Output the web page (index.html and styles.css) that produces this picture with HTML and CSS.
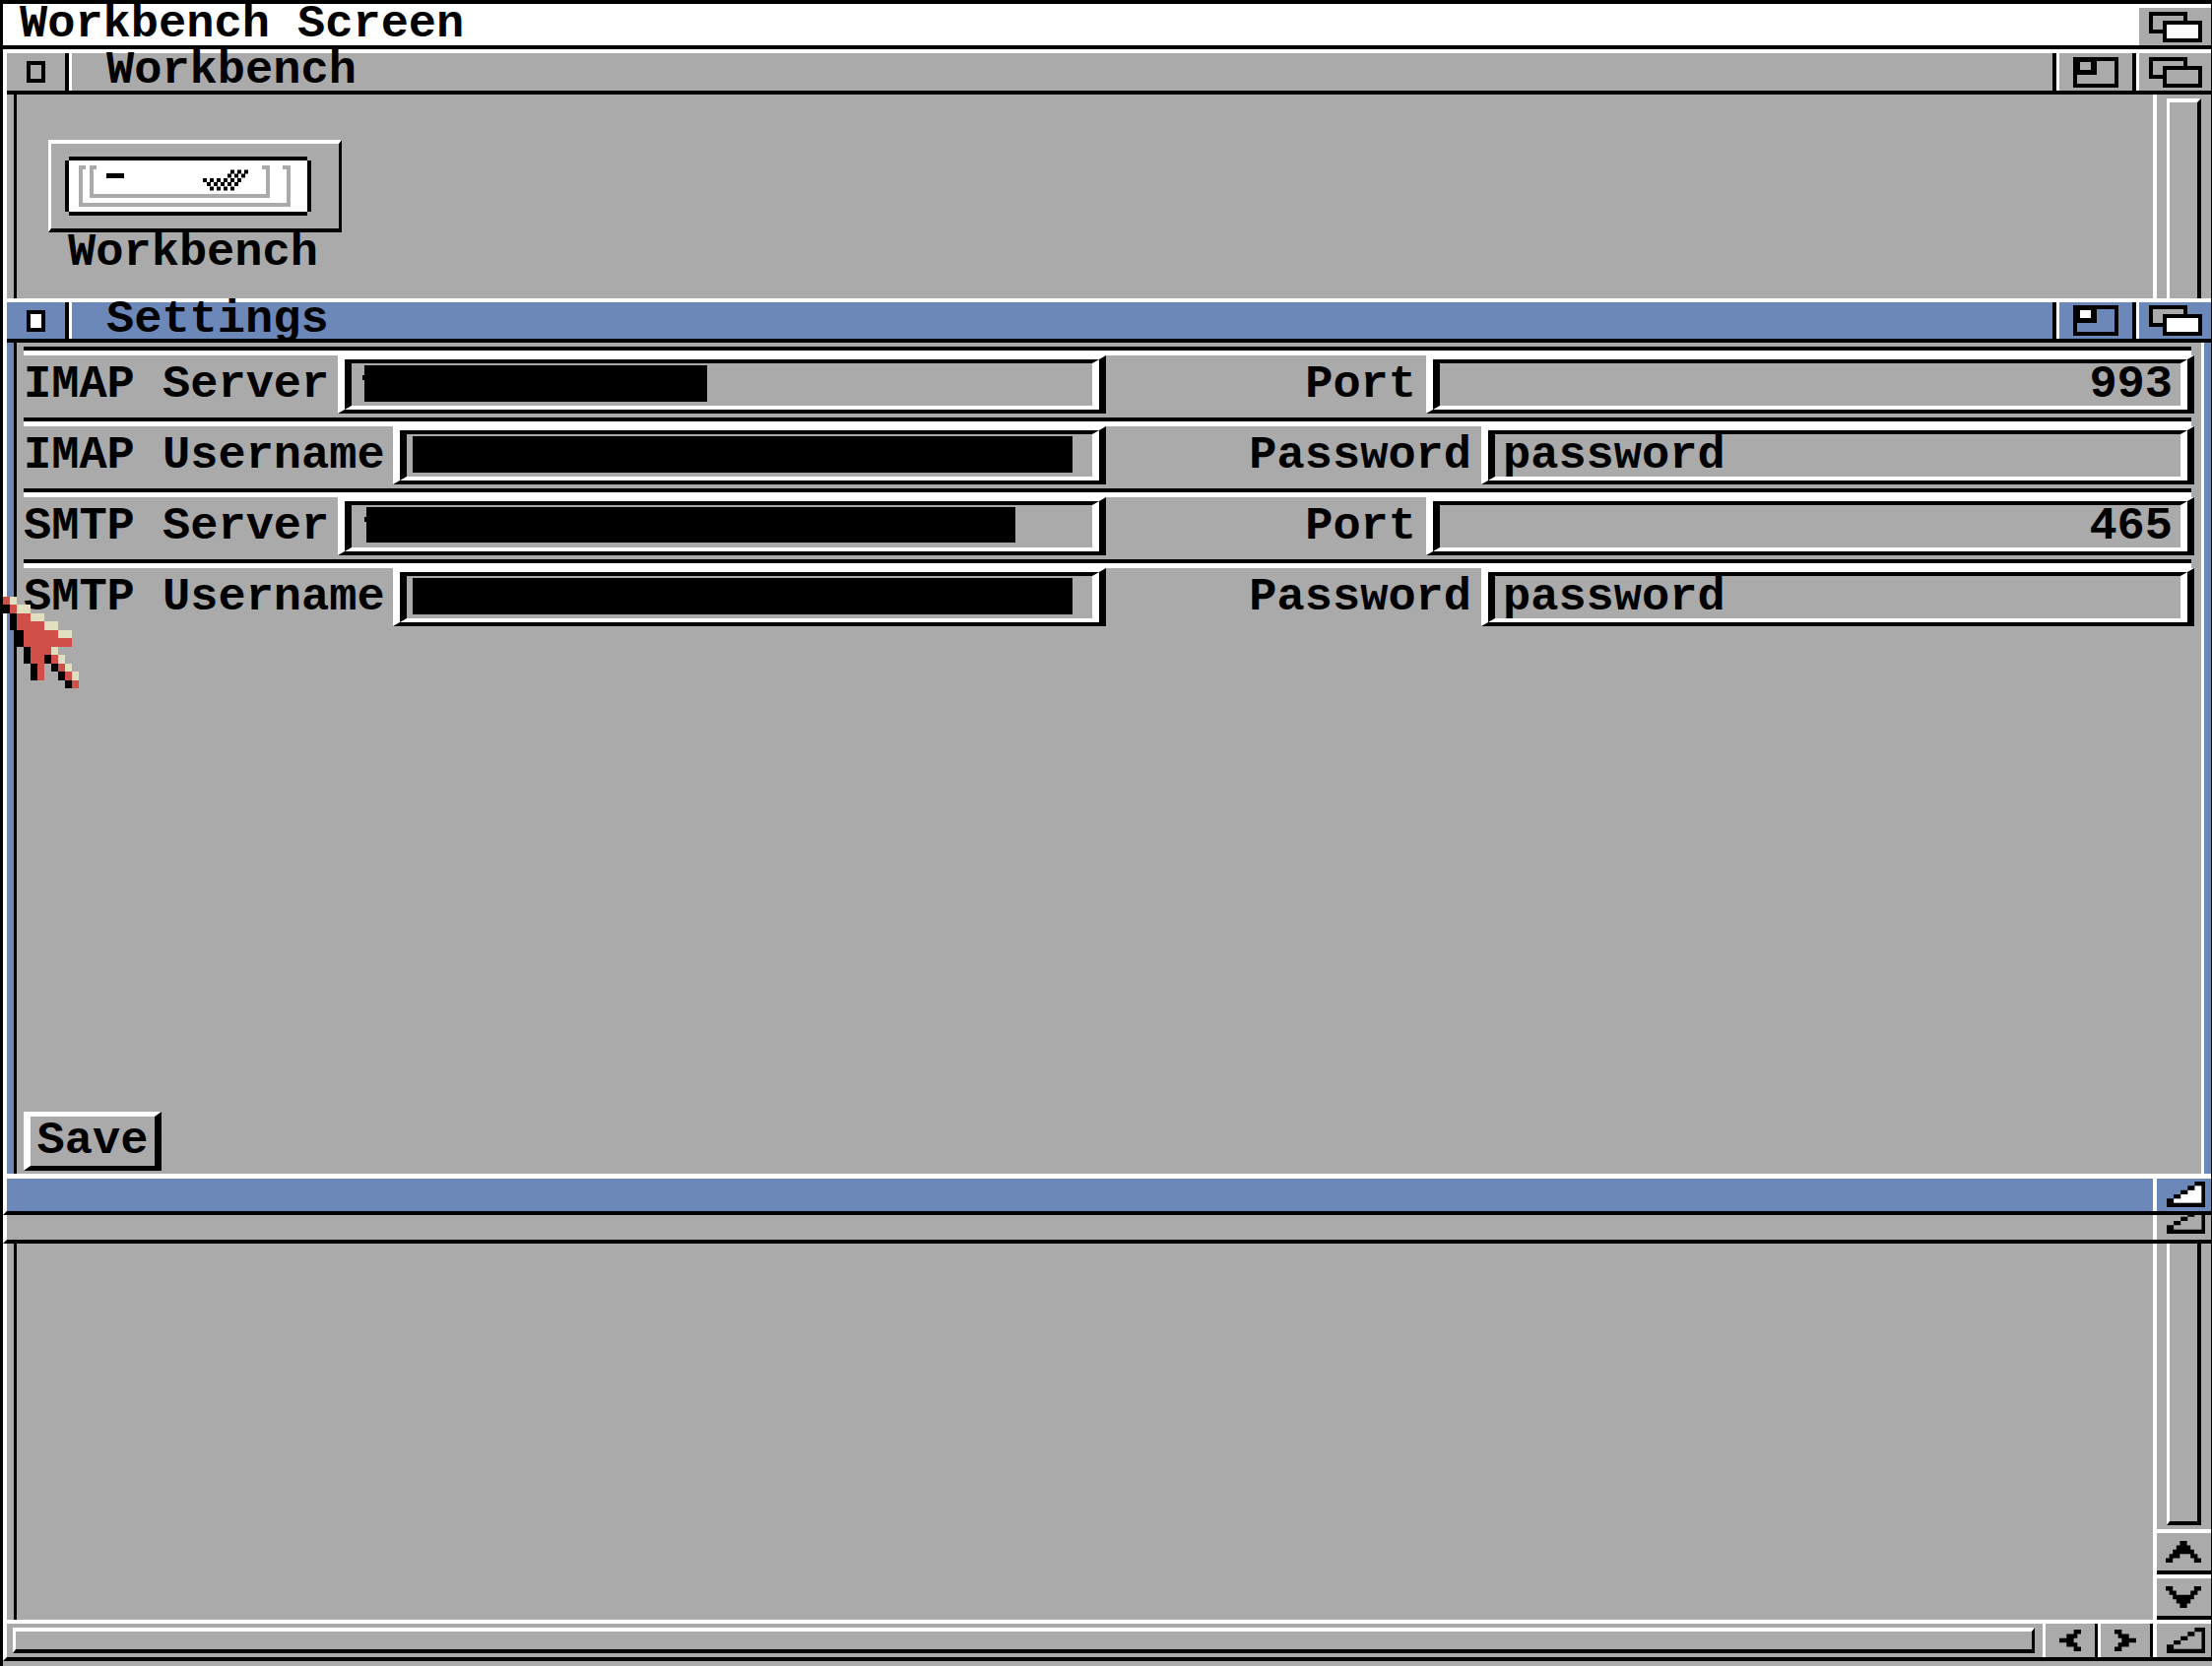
FILE: index.html
```html
<!DOCTYPE html>
<html lang="en">
<head>
<meta charset="utf-8">
<title>Workbench Screen</title>
<link rel="stylesheet" href="styles.css">
</head>
<body>
<svg class="defs" aria-hidden="true">
  <symbol id="zoom" viewBox="0 0 46 31">
    <path fill="#000" d="M0 0h46v31H0z"/>
    <path class="face" d="M24 4h18v23H4V18h20z"/>
    <path class="chip" d="M7 5h11v8H7z"/>
  </symbol>
  <symbol id="depth" viewBox="0 0 54 31">
    <path fill="#000" d="M0 0h39v22H0z"/>
    <path fill="#aaa" d="M4 4h31v14H4z"/>
    <path fill="#000" d="M14 9h40v22H14z"/>
    <path class="chip" d="M18 13h32v14H18z"/>
  </symbol>
  <symbol id="size" viewBox="0 0 11 6" preserveAspectRatio="none">
    <path class="chip" d="M8 1h2v4H2V4h2V3h2V2h2z"/>
    <path fill="#000" d="M8 0h3v6H0V4h2V3h2V2h2V1h2zM8 1v1H6v1H4v1H2v1h8V1z"/>
  </symbol>
</svg>

<div class="screen">
  <header class="menubar">
    <h1 class="menubar-title">Workbench Screen</h1>
    <button class="depth-gadget front" aria-label="Cycle screens"><svg class="depth-icon"><use href="#depth"/></svg></button>
  </header>

  <section class="window workbench">
    <div class="titlebar">
      <button class="close-gadget" aria-label="Close"><span class="close-icon"></span></button>
      <h2 class="title">Workbench</h2>
      <button class="zoom-gadget" aria-label="Zoom"><svg class="zoom-icon"><use href="#zoom"/></svg></button>
      <button class="depth-gadget" aria-label="Depth"><svg class="depth-icon"><use href="#depth"/></svg></button>
    </div>
    <div class="workbench-body">
      <main class="drawer">
        <figure class="disk">
          <div class="disk-frame">
            <svg class="disk-art" viewBox="0 0 250 60" aria-hidden="true">
              <path fill="#000" d="M4 0h242v4h4v52h-4v4H4v-4H0V4h4z"/>
              <path fill="#fff" d="M4 4h242v52H4z"/>
              <path fill="none" stroke="#aaa" stroke-width="4" d="M21 11h-5v38h211V11h-6M32 11h-5v29h179V11h-6"/>
              <path fill="#000" d="M42 17h18v5H42z"/>
              <path fill="none" stroke="#000" stroke-width="4" stroke-dasharray="4 3" d="M168 15.500h18M165 19.500h18M140 24h39M144 28h32M147 32.500h25"/>
            </svg>
          </div>
          <figcaption class="disk-name">Workbench</figcaption>
        </figure>
      </main>
      <div class="vscroll">
        <div class="vtrack"><div class="vknob"></div></div>
        <button class="arrow-v" aria-label="Scroll up"><svg class="glyph-v" viewBox="0 0 10 5" preserveAspectRatio="none"><path d="M4 0h2v1h1v1h1v1h1v1h1v1H8V4H7V3H6H4v1H3H3v0H2v1H0V4h1V3h1V2h1V1h1z"/></svg></button>
        <button class="arrow-v" aria-label="Scroll down"><svg class="glyph-v" viewBox="0 0 10 5" preserveAspectRatio="none"><path d="M4 5h2V4h1V3h1V2h1V1h1V0H8v1H7v1H3V1H2V0H0v1h1v1h1v1h1v1h1z"/></svg></button>
      </div>
    </div>
    <div class="hscroll">
      <div class="hknob"></div>
      <button class="arrow-h" aria-label="Scroll left"><svg class="glyph-h" viewBox="0 0 6 5" preserveAspectRatio="none"><path d="M4 0h2v1H5v1H4v1h1v1h1v1H4V4H2V3H0V2h2V1h2z"/></svg></button>
      <button class="arrow-h" aria-label="Scroll right"><svg class="glyph-h" viewBox="0 0 6 5" preserveAspectRatio="none"><path d="M2 0H0v1h1v1h1v1H1v1H0v1h2V4h2V3h2V2H4V1H2z"/></svg></button>
      <button class="size-gadget" aria-label="Resize"><svg class="size-icon"><use href="#size"/></svg></button>
    </div>
  </section>

  <section class="window overlay behind">
    <div class="bottombar"><button class="size-gadget" aria-label="Resize"><svg class="size-icon"><use href="#size"/></svg></button></div>
  </section>

  <section class="window overlay settings front">
    <div class="titlebar">
      <button class="close-gadget" aria-label="Close"><span class="close-icon"></span></button>
      <h2 class="title">Settings</h2>
      <button class="zoom-gadget" aria-label="Zoom"><svg class="zoom-icon"><use href="#zoom"/></svg></button>
      <button class="depth-gadget" aria-label="Depth"><svg class="depth-icon"><use href="#depth"/></svg></button>
    </div>
    <form class="form">
      <div class="row">
        <div class="pair"><label class="label" for="imap-server">IMAP Server</label><div class="field"><input class="input" id="imap-server" type="text"><span class="mask mask-imap-server"></span></div></div>
        <div class="pair"><label class="label right" for="imap-port">Port</label><div class="field"><input class="input number" id="imap-port" type="text" value="993"></div></div>
      </div>
      <div class="row wide">
        <div class="pair"><label class="label" for="imap-user">IMAP Username</label><div class="field"><input class="input" id="imap-user" type="text"><span class="mask mask-user"></span></div></div>
        <div class="pair"><label class="label right" for="imap-pass">Password</label><div class="field"><input class="input" id="imap-pass" type="text" value="password"></div></div>
      </div>
      <div class="row">
        <div class="pair"><label class="label" for="smtp-server">SMTP Server</label><div class="field"><input class="input" id="smtp-server" type="text"><span class="mask mask-smtp-server"></span></div></div>
        <div class="pair"><label class="label right" for="smtp-port">Port</label><div class="field"><input class="input number" id="smtp-port" type="text" value="465"></div></div>
      </div>
      <div class="row wide">
        <div class="pair"><label class="label" for="smtp-user">SMTP Username</label><div class="field"><input class="input" id="smtp-user" type="text"><span class="mask mask-user"></span></div></div>
        <div class="pair"><label class="label right" for="smtp-pass">Password</label><div class="field"><input class="input" id="smtp-pass" type="text" value="password"></div></div>
      </div>
      <button class="save" type="button">Save</button>
    </form>
    <div class="bottombar"><button class="size-gadget" aria-label="Resize"><svg class="size-icon"><use href="#size"/></svg></button></div>
  </section>

  <svg class="pointer" viewBox="0 0 11 11" preserveAspectRatio="none" shape-rendering="crispEdges" aria-hidden="true">
    <path fill="#000" d="M0 1h1v1H0zM1 2h1v2H1zM2 4h1v2H2zM3 6h1v2H3zM4 8h1v2H4zM6 7h1v1H6zM7 8h1v1H7zM8 9h1v1H8zM9 10h1v1H9z"/>
    <path fill="#d04f48" d="M0 0h1v1H0zM1 1h1v1H1zM2 2h2v1H2zM2 3h4v1H2zM3 4h5v1H3zM3 5h7v1H3zM4 6h3v1H4zM4 7h2v1H4zM7 7h1v1H7zM5 8h1v2H5zM8 8h1v1H8zM9 9h1v1H9zM10 10h1v1h-1z"/>
    <path fill="#e0e0c0" d="M1 0h1v1H1zM2 1h2v1H2zM4 2h2v1H4zM6 3h2v1H6zM8 4h2v1H8zM7 6h1v1H7zM8 7h1v1H8zM9 8h1v1H9zM10 9h1v1h-1z"/>
  </svg>
</div>
</body>
</html>
```
FILE: styles.css
```css
* { box-sizing: border-box; }

:root {
  --grey: #aaa;
  --blue: #6c88b8;
  --black: #000;
  --white: #fff;
}

body {
  margin: 0;
  background: var(--black);
  color: var(--black);
  font: bold 47px/36px "Liberation Mono", "Courier New", monospace;
}

h1, h2, figure { margin: 0; font: inherit; }

button, input {
  margin: 0;
  padding: 0;
  border: 0;
  border-radius: 0;
  background: none;
  color: inherit;
  font: inherit;
  outline: 0;
}

svg { display: block; }
.defs { position: absolute; width: 0; height: 0; }

.screen {
  position: relative;
  display: flex;
  flex-direction: column;
  min-height: 100vh;
  padding: 4px 1px 5px 3px;
  background: linear-gradient(var(--grey), var(--grey)) content-box, linear-gradient(var(--grey), var(--grey)) 3px 100% / 100% 5px no-repeat, var(--black);
}

/* Screen bar */
.menubar {
  display: flex;
  height: 46px;
  background: var(--white);
  border-bottom: 4px solid var(--black);
}
.menubar-title { flex: 1; padding-left: 17px; line-height: 42px; }
.menubar .depth-gadget { margin-top: 4px; border-left: 0; width: 73px; padding: 0 0 0 10px; background: var(--grey); }

/* Windows */
.window {
  --face: var(--grey);
  --chip: var(--grey);
  display: flex;
  flex-direction: column;
  border-left: 4px solid var(--white);
  border-bottom: 4px solid var(--black);
  background: var(--face);
}
.front { --chip: var(--white); }
.window.front { --face: var(--blue); }
.chip { fill: var(--chip, #fff); }
.face { fill: var(--face); }

.workbench { flex: 1; }
.overlay { position: absolute; left: 3px; right: 1px; top: 303px; }
.settings { height: 55vh; }
.behind { height: calc(55vh + 29px); justify-content: flex-end; }

.titlebar {
  display: flex;
  height: 46px;
  border-top: 4px solid var(--white);
  border-bottom: 4px solid var(--black);
}
.settings .titlebar { height: 45px; }
.close-gadget { width: 63px; padding-left: 20px; border-right: 4px solid var(--black); }
.close-icon { display: block; width: 19px; height: 22px; border: 4px solid var(--black); background: var(--chip); }
.title { flex: 1; padding-left: 35px; border-left: 3px solid var(--white); border-right: 4px solid var(--black); }
.zoom-gadget { width: 81px; padding-left: 14px; border-left: 3px solid var(--white); border-right: 4px solid var(--black); }
.depth-gadget { width: 76px; padding-left: 10px; border-left: 3px solid var(--white); }
.zoom-icon { width: 46px; height: 31px; }
.depth-icon { width: 54px; height: 31px; }

.size-gadget { width: 59px; padding-left: 10px; border-left: 4px solid var(--white); }
.size-icon { width: 39px; height: 26px; }

.bottombar { display: flex; justify-content: flex-end; height: 38px; flex: none; }
.settings .bottombar { border-top: 5px solid var(--white); }

/* Workbench contents */
.workbench-body {
  display: flex;
  flex: 1;
  margin-left: 7px;
}
.drawer { flex: 1; padding: 46px 32px; border-left: 3px solid var(--black); }
.disk { width: 298px; }
.disk-frame {
  height: 94px;
  padding: 13px 14px;
  border: solid;
  border-width: 4px 3px;
  border-color: var(--white) var(--black) var(--black) var(--white);
}
.disk-art { width: 250px; height: 60px; }
.disk-name { padding: 3px 4px 0 0; text-align: center; }

.vscroll { display: flex; flex-direction: column; width: 59px; border-left: 4px solid var(--white); }
.vtrack { display: flex; flex: 1; padding: 4px 10px; }
.vknob {
  flex: 1;
  border: solid;
  border-width: 4px 4px 4px 3px;
  border-color: var(--white) var(--black) var(--black) var(--white);
}
.arrow-v {
  height: 46px;
  padding-left: 9px;
  border: solid;
  border-width: 4px 0;
  border-color: var(--white) transparent var(--black);
}
.glyph-v { width: 36px; height: 22px; }

.hscroll { display: flex; height: 38px; border-top: 4px solid var(--white); }
.hknob {
  flex: 1;
  margin: 4px 8px 4px 6px;
  border: solid;
  border-width: 4px 3px;
  border-color: var(--white) var(--black) var(--black) var(--white);
}
.arrow-h { width: 56px; padding-left: 14px; border: solid; border-width: 0 3px; border-color: transparent var(--black) transparent var(--white); }
.glyph-h { width: 22px; height: 22px; }

/* Settings form */
.form {
  display: flex;
  flex-direction: column;
  flex: 1;
  margin: 0 7px;
  padding: 4px 7px 3px;
  border-left: 3px solid var(--black);
  border-right: 3px solid var(--white);
  background: var(--grey);
}
.row {
  --label: 319px;
  display: grid;
  grid-template-columns: 1fr 1fr;
  grid-template-rows: 9px 59px;
  column-gap: 6px;
  height: 72px;
}
.row.wide { --label: 375px; }
.row::before {
  content: "";
  grid-column: 1 / -1;
  margin-right: 3px;
  border-top: 4px solid var(--black);
  border-bottom: 5px solid var(--white);
}
.pair { display: grid; grid-template: 59px / var(--label) 1fr; }
.label { line-height: 59px; white-space: nowrap; }
.label.right { padding-right: 10px; text-align: right; }
.field {
  position: relative;
  display: flex;
  border: solid;
  border-width: 4px 7px;
  border-color: var(--white) var(--black) var(--black) var(--white);
}
.input {
  flex: 1;
  min-width: 0;
  height: 51px;
  padding: 0 8px;
  border: solid;
  border-width: 4px 7px;
  border-color: var(--black) var(--white) var(--white) var(--black);
}
.number { text-align: right; }

/* Blacked-out values, with the edge of the first letter showing */
.mask { position: absolute; background: var(--black); }
.mask-imap-server { left: 20px; top: 6px; width: 348px; height: 37px; }
.mask-smtp-server { left: 22px; top: 6px; width: 659px; height: 36px; }
.mask-user { left: 13px; top: 6px; width: 670px; height: 37px; }
.mask-imap-server::before,
.mask-smtp-server::before {
  content: "";
  position: absolute;
  right: 100%;
  top: 10px;
  width: 2px;
  height: 5px;
  background: var(--black);
}

.save {
  align-self: flex-start;
  width: 140px;
  height: 60px;
  margin-top: auto;
  border: solid;
  border-width: 5px 7px;
  border-color: var(--white) var(--black) var(--black) var(--white);
}

.pointer { position: absolute; left: 3px; top: 606px; width: 77px; height: 93px; }
```
